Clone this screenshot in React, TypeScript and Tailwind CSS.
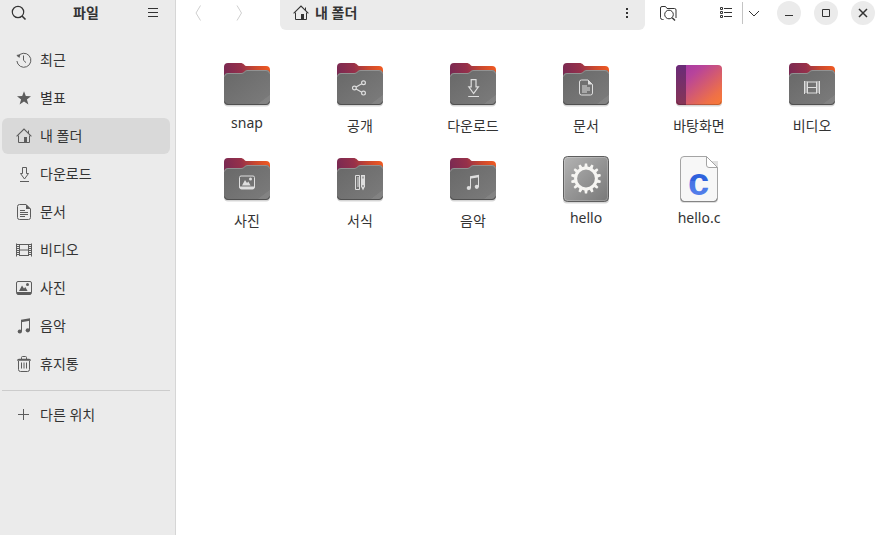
import type { ReactNode } from "react";

type Glyph = () => ReactNode;

const HomeGlyph: Glyph = () => (
  <>
    <path d="M0.6 8.4 8 1 15.4 8.4" fill="none" stroke="currentColor" strokeWidth="1.1" />
    <path d="M2.5 7.5V14.5H13.5V7.5M12.5 2.5V5.5" fill="none" stroke="currentColor" />
    <path d="M8 9h3v5.5H8z" fill="currentColor" />
  </>
);

const RecentGlyph: Glyph = () => (
  <>
    <path d="M1.9 4.6A7 7 0 1 1 0.9 9" fill="none" stroke="currentColor" />
    <path d="M0.4 3 4.4 2.2 3.4 6z" fill="currentColor" />
    <path d="M7.5 3.5V8.3L10 10.6" fill="none" stroke="currentColor" />
  </>
);

const StarGlyph: Glyph = () => (
  <path
    d="M8 1.2 9.8 6.1 15 6.3 10.9 9.5 12.4 14.5 8 11.6 3.6 14.5 5.1 9.5 1 6.3 6.2 6.1z"
    fill="currentColor"
  />
);

const DownloadGlyph: Glyph = () => (
  <path
    d="M6.5 1.5h4v6h2L8.5 13 4.5 7.5h2zM4 15.5h9"
    fill="none"
    stroke="currentColor"
  />
);

const DocumentGlyph: Glyph = () => (
  <>
    <path
      d="M10 0.5H3.5a2 2 0 0 0-2 2v11a2 2 0 0 0 2 2h9a2 2 0 0 0 2-2V5z"
      fill="none"
      stroke="currentColor"
    />
    <path d="M10 0.3V5h4.7z" fill="currentColor" />
    <path d="M4 6.5h5M4 8.5h8M4 10.5h8M4 12.5h5" stroke="currentColor" />
  </>
);

const VideoGlyph: Glyph = () => (
  <>
    <path d="M3.5 2v12M12.5 2v12M3.5 2.5h9M3.5 8h9M3.5 13.5h9" fill="none" stroke="currentColor" />
    <path d="M0.5 1.5v13M15.5 1.5v13" stroke="currentColor" />
    <path d="M2 2v12M14 2v12" stroke="currentColor" strokeWidth="2" strokeDasharray="1 1" />
  </>
);

const PhotoGlyph: Glyph = () => (
  <>
    <rect x="0.5" y="1.5" width="15" height="12.5" rx="1.5" fill="none" stroke="currentColor" />
    <path d="M0.5 12h15v1a2 2 0 0 1-2 2h-11a2 2 0 0 1-2-2z" fill="currentColor" />
    <path d="M3 11 6 5.4 8 8.4 9.3 7 11.6 11z" fill="currentColor" />
    <circle cx="11.5" cy="4.5" r="1.5" fill="currentColor" />
  </>
);

const MusicGlyph: Glyph = () => (
  <>
    <path d="M5.5 13.5V3L13.5 1.5V12.5" fill="none" stroke="currentColor" />
    <path d="M5 1.8 14 0.3V2.8L5 4.3z" fill="currentColor" />
    <circle cx="3.8" cy="13.5" r="2.1" fill="currentColor" />
    <circle cx="11.8" cy="12.3" r="2.1" fill="currentColor" />
  </>
);

const TrashGlyph: Glyph = () => (
  <>
    <path d="M2.5 5v8.5a2 2 0 0 0 2 2h7a2 2 0 0 0 2-2V5" fill="none" stroke="currentColor" />
    <path d="M1 4.8a2 2 0 0 1 2-2h10a2 2 0 0 1 2 2z" fill="currentColor" />
    <path d="M5.5 3V1.5a1 1 0 0 1 1-1h3a1 1 0 0 1 1 1V3" fill="none" stroke="currentColor" />
    <path d="M5.5 6.5v6M8 6.5v6M10.5 6.5v6" stroke="currentColor" />
  </>
);

const PlusGlyph: Glyph = () => <path d="M7.5 2v11M2 7.5h11" stroke="currentColor" />;

const ShareGlyph: Glyph = () => (
  <g fill="none" stroke="currentColor" strokeWidth="1.2">
    <circle cx="2.4" cy="8.5" r="1.9" />
    <circle cx="11.5" cy="3.3" r="1.9" />
    <circle cx="11.5" cy="13.6" r="1.9" />
    <path d="M4.1 7.5 9.8 4.3M4.1 9.5 9.8 12.7" />
  </g>
);

const TemplateGlyph: Glyph = () => (
  <>
    <path d="M3.5 1v14h4V1z" fill="none" stroke="currentColor" />
    <path d="M5 3.5h2M5 5.5h2M5 7.5h2M5 9.5h2M5 11.5h2" stroke="currentColor" />
    <path d="M9 0.5h4v11.500l-2 4-2-4z" fill="currentColor" />
    <path d="M10.5 2h1v2h-1zM10 11h2v1h-2z" fill="#6a6a6a" />
  </>
);

function Icon({ glyph: G, className = "" }: { glyph: Glyph; className?: string }) {
  return (
    <svg viewBox="0 0 16 16" className={`size-4 shrink-0 ${className}`} aria-hidden="true">
      <G />
    </svg>
  );
}

function FolderArt({ id, glyph: G, scale = 1 }: { id: string; glyph?: Glyph; scale?: number }) {
  return (
    <svg viewBox="0 0 48 48" className="size-12 overflow-visible" aria-hidden="true">
      <defs>
        <linearGradient id={`${id}-back`} x1="0" y1="0.4" x2="1" y2="0.2">
          <stop offset="0" stopColor="#772953" />
          <stop offset="0.4" stopColor="#96304a" />
          <stop offset="0.7" stopColor="#c9482f" />
          <stop offset="1" stopColor="#f05a22" />
        </linearGradient>
        <linearGradient id={`${id}-front`} x1="0" y1="0" x2="1" y2="1">
          <stop offset="0" stopColor="#686868" />
          <stop offset="0.85" stopColor="#797979" />
          <stop offset="0.86" stopColor="#828282" />
          <stop offset="1" stopColor="#858585" />
        </linearGradient>
      </defs>
      <rect x="1" y="12" width="46" height="34.5" rx="4" fill="#000" opacity="0.16" />
      <path
        d="M1 7a4 4 0 0 1 4-4h12.500c1.500 0 2.500 0.500 3.500 1.500s1.500 1.500 3 1.500h19a4 4 0 0 1 4 4v25H1z"
        fill={`url(#${id}-back)`}
      />
      <path
        d="M1 17a4 4 0 0 1 4-4h13c1.500 0 2.500-0.500 3.500-1.500S23.500 10 25 10h18a4 4 0 0 1 4 4v27a4 4 0 0 1-4 4H5a4 4 0 0 1-4-4z"
        fill={`url(#${id}-front)`}
      />
      <path
        d="M1.500 16.500a3.500 3.500 0 0 1 3.500-3h13c1.500 0 2.500-0.500 3.500-1.500s2-1.500 3.500-1.500h18a3.500 3.500 0 0 1 3.500 3"
        fill="none"
        stroke="#929292"
      />
      <path d="M1.500 41.500a3.500 3.500 0 0 0 3.500 3h38a3.500 3.500 0 0 0 3.500-3" fill="none" stroke="#505050" />
      {G && (
        <g transform={`translate(24 27.500) scale(${scale}) translate(-8 -8)`} className="text-[#dedede]">
          <G />
        </g>
      )}
    </svg>
  );
}

function DesktopArt() {
  return (
    <svg viewBox="0 0 48 48" className="size-12 overflow-visible" aria-hidden="true">
      <defs>
        <linearGradient id="desktop-fill" x1="0" y1="0" x2="1" y2="1">
          <stop offset="0" stopColor="#a236a8" />
          <stop offset="0.3" stopColor="#b8449a" />
          <stop offset="0.8" stopColor="#ee7048" />
          <stop offset="1" stopColor="#fa7a34" />
        </linearGradient>
        <linearGradient id="desktop-dock" x1="0" y1="0" x2="0" y2="1">
          <stop offset="0" stopColor="#6a2b78" />
          <stop offset="1" stopColor="#873556" />
        </linearGradient>
      </defs>
      <rect x="1" y="6" width="46" height="40.500" rx="4" fill="#000" opacity="0.16" />
      <rect x="1" y="5" width="46" height="40" rx="4" fill="url(#desktop-fill)" />
      <path d="M11 5H5a4 4 0 0 0-4 4v32a4 4 0 0 0 4 4h6z" fill="url(#desktop-dock)" />
      <path d="M2 41.500a3 3 0 0 0 3 3h38a3 3 0 0 0 3-3" fill="none" stroke="#000" opacity="0.2" />
    </svg>
  );
}

const TEETH = Array.from({ length: 14 }, (_, i) => (i * 360) / 14);

function ProgramArt() {
  return (
    <svg viewBox="0 0 48 48" className="size-12 overflow-visible" aria-hidden="true">
      <defs>
        <linearGradient id="program-fill" x1="0" y1="0" x2="1" y2="1">
          <stop offset="0" stopColor="#b4b4b4" />
          <stop offset="0.5" stopColor="#959595" />
          <stop offset="1" stopColor="#787878" />
        </linearGradient>
      </defs>
      <rect x="1" y="3" width="46" height="45.500" rx="4" fill="#000" opacity="0.16" />
      <rect x="1.500" y="1.500" width="45" height="45" rx="4" fill="url(#program-fill)" stroke="#5e5e5e" />
      <rect x="2.500" y="2.500" width="43" height="43" rx="3" fill="none" stroke="#fff" opacity="0.22" />
      <g transform="translate(24 23.500)">
        <circle r="10.400" fill="none" stroke="#f6f5f2" strokeWidth="3" />
        {TEETH.map((angle) => (
          <path key={angle} d="M-1.700 -11.300 -1.100 -15h2.200L1.700 -11.300z" fill="#f6f5f2" transform={`rotate(${angle})`} />
        ))}
      </g>
    </svg>
  );
}

function SourceArt() {
  return (
    <svg viewBox="0 0 48 48" className="size-12 overflow-visible" aria-hidden="true">
      <defs>
        <linearGradient id="source-letter" x1="0" y1="0" x2="0" y2="1">
          <stop offset="0.480" stopColor="#2f62dd" />
          <stop offset="0.500" stopColor="#4673e4" />
          <stop offset="1" stopColor="#5a86ee" />
        </linearGradient>
      </defs>
      <path d="M5 6h38v38a4 4 0 0 1-4 4H9a4 4 0 0 1-4-4z" fill="#000" opacity="0.120" />
      <path
        d="M9 1.500h22.500l11 11V43a3.500 3.500 0 0 1-3.500 3.500H9A3.500 3.500 0 0 1 5.500 43V5A3.500 3.500 0 0 1 9 1.500z"
        fill="#f7f7f7"
        stroke="#a4a4a4"
      />
      <path d="M31.500 1.500V10a2.500 2.500 0 0 0 2.500 2.500h8.500z" fill="#fff" stroke="#a4a4a4" />
      <path d="M6 43.500a3 3 0 0 0 3 3h30a3 3 0 0 0 3-3" fill="none" stroke="#858585" />
      <text
        x="23.500"
        y="39.500"
        textAnchor="middle"
        fontSize="38"
        fontWeight="700"
        fontFamily="'Liberation Sans', sans-serif"
        fill="url(#source-letter)"
      >
        c
      </text>
    </svg>
  );
}

const places: { label: string; glyph: Glyph }[] = [
  { label: "최근", glyph: RecentGlyph },
  { label: "별표", glyph: StarGlyph },
  { label: "내 폴더", glyph: HomeGlyph },
  { label: "다운로드", glyph: DownloadGlyph },
  { label: "문서", glyph: DocumentGlyph },
  { label: "비디오", glyph: VideoGlyph },
  { label: "사진", glyph: PhotoGlyph },
  { label: "음악", glyph: MusicGlyph },
  { label: "휴지통", glyph: TrashGlyph },
];

const files: { label: string; art: ReactNode; latin?: boolean }[] = [
  { label: "snap", art: <FolderArt id="snap" />, latin: true },
  { label: "공개", art: <FolderArt id="public" glyph={ShareGlyph} /> },
  { label: "다운로드", art: <FolderArt id="downloads" glyph={DownloadGlyph} scale={1.2} /> },
  { label: "문서", art: <FolderArt id="documents" glyph={DocumentGlyph} /> },
  { label: "바탕화면", art: <DesktopArt /> },
  { label: "비디오", art: <FolderArt id="videos" glyph={VideoGlyph} /> },
  { label: "사진", art: <FolderArt id="pictures" glyph={PhotoGlyph} /> },
  { label: "서식", art: <FolderArt id="templates" glyph={TemplateGlyph} /> },
  { label: "음악", art: <FolderArt id="music" glyph={MusicGlyph} /> },
  { label: "hello", art: <ProgramArt />, latin: true },
  { label: "hello.c", art: <SourceArt />, latin: true },
];

function PlaceButton({ label, glyph, selected = false }: { label: string; glyph: Glyph; selected?: boolean }) {
  return (
    <button
      type="button"
      aria-current={selected ? "page" : undefined}
      className={`flex h-9 w-full items-center gap-2 rounded-md px-3.5 text-left ${selected ? "bg-[#d9d9d9]" : ""}`}
    >
      <Icon glyph={glyph} className="text-[#5c5c5c]" />
      {label}
    </button>
  );
}

function Sidebar() {
  return (
    <aside className="flex w-44 shrink-0 flex-col border-r border-[#d6d6d6] bg-[#ebebeb]">
      <header className="flex h-[26px] items-center justify-between pr-3.5 pl-[11px]">
        <button type="button" aria-label="검색">
          <svg viewBox="0 0 16 16" className="size-4 text-[#333]" fill="none" stroke="currentColor" strokeWidth="1.2" aria-hidden="true">
            <circle cx="7" cy="7" r="5.700" />
            <path d="M11 11 14.500 14.500" strokeWidth="1.600" />
          </svg>
        </button>
        <h1 className="font-bold">파일</h1>
        <button type="button" aria-label="메뉴">
          <svg viewBox="0 0 16 16" className="size-4 text-[#333]" stroke="currentColor" aria-hidden="true">
            <path d="M3 3.500h10M3 7.500h10M3 11.500h10" />
          </svg>
        </button>
      </header>
      <nav className="pt-4 pr-[5px] pl-0.5">
        <ul className="flex flex-col gap-0.5">
          {places.map((p) => (
            <li key={p.label}>
              <PlaceButton {...p} selected={p.label === "내 폴더"} />
            </li>
          ))}
        </ul>
        <hr className="mt-2 mb-1.5 border-[#cccccc]" />
        <PlaceButton label="다른 위치" glyph={PlusGlyph} />
      </nav>
    </aside>
  );
}

function WindowButton({ label, d, bold = false }: { label: string; d: string; bold?: boolean }) {
  return (
    <button type="button" aria-label={label} className="flex size-6 items-center justify-center rounded-full bg-[#ebebeb]">
      <svg
        viewBox="0 0 16 16"
        className="size-4 text-[#333]"
        fill="none"
        stroke="currentColor"
        strokeWidth={bold ? 1.5 : 1}
        aria-hidden="true"
      >
        <path d={d} />
      </svg>
    </button>
  );
}

function HeaderBar() {
  return (
    <header className="flex h-[30px] items-start pr-[5px] pl-3.5">
      <div className="flex h-[26px] w-[90px] items-center gap-[25px] text-[#cfcfcf]">
        <button type="button" aria-label="뒤로" disabled>
          <Icon glyph={() => <path d="M10.500 0.500 6 8l4.500 7.500" fill="none" stroke="currentColor" />} />
        </button>
        <button type="button" aria-label="앞으로" disabled>
          <Icon glyph={() => <path d="M6 0.500 10.500 8 6 15.500" fill="none" stroke="currentColor" />} />
        </button>
      </div>
      <div className="flex h-[30px] flex-1 items-center justify-between rounded-b-md bg-[#ebebeb] pr-2.5 pb-1 pl-[13px]">
        <button type="button" className="flex items-center gap-1.5 font-bold">
          <Icon glyph={HomeGlyph} />
          내 폴더
        </button>
        <button type="button" aria-label="폴더 메뉴">
          <svg viewBox="0 0 16 16" className="size-4 text-[#333]" fill="currentColor" aria-hidden="true">
            <path d="M7 3h2v2H7zM7 7h2v2H7zM7 11h2v2H7z" />
          </svg>
        </button>
      </div>
      <div className="flex h-[26px] items-center pl-[15px] text-[#333]">
        <button type="button" aria-label="폴더 검색" className="mr-[41px]">
          <svg viewBox="0 0 17 16" className="h-4 w-[17px]" fill="none" stroke="currentColor" aria-hidden="true">
            <path d="M3.500 14.500H2.500a2 2 0 0 1-2-2V3a1.500 1.500 0 0 1 1.500-1.500h3.500L7 3.500h7.500a1.500 1.500 0 0 1 1.500 1.500v8" />
            <circle cx="9" cy="9.500" r="4.300" />
            <path d="M12.200 12.700 15 15.500" strokeWidth="1.400" />
          </svg>
        </button>
        <button type="button" aria-label="목록 보기" className="mr-2">
          <Icon
            glyph={() => (
              <path
                d="M2.500 2.500h2v2h-2zM2.500 6.500h2v2h-2zM2.500 10.500h2v2h-2zM6 3.500h8M6 7.500h8M6 11.500h8"
                fill="none"
                stroke="currentColor"
              />
            )}
          />
        </button>
        <span className="h-[22px] w-px bg-[#c4c4c4]" />
        <button type="button" aria-label="보기 설정" className="mr-[15px] ml-[3px]">
          <Icon glyph={() => <path d="M3 6 8 11 13 6" fill="none" stroke="currentColor" />} />
        </button>
        <div className="flex gap-[13px]">
          <WindowButton label="최소화" d="M4 10.500h8" />
          <WindowButton label="최대화" d="M4.500 4.500h7v7h-7z" />
          <WindowButton label="닫기" d="M4 4 12 12M12 4 4 12" bold />
        </div>
      </div>
    </header>
  );
}

export default function App() {
  return (
    <div className="flex min-h-screen bg-white font-['Noto_Sans','Noto_Sans_CJK_KR',sans-serif] text-[14px] leading-5 text-[#333333]">
      <Sidebar />
      <main className="min-w-0 flex-1">
        <HeaderBar />
        <ul className="grid grid-cols-[repeat(auto-fill,112px)] gap-x-px gap-y-[18px] pt-[30px] pl-[15px]">
          {files.map((f) => (
            <li key={f.label}>
              <button type="button" className="flex w-full flex-col items-center gap-[7px]">
                {f.art}
                <span className={f.latin ? "leading-4" : "leading-[22px]"}>{f.label}</span>
              </button>
            </li>
          ))}
        </ul>
      </main>
    </div>
  );
}
